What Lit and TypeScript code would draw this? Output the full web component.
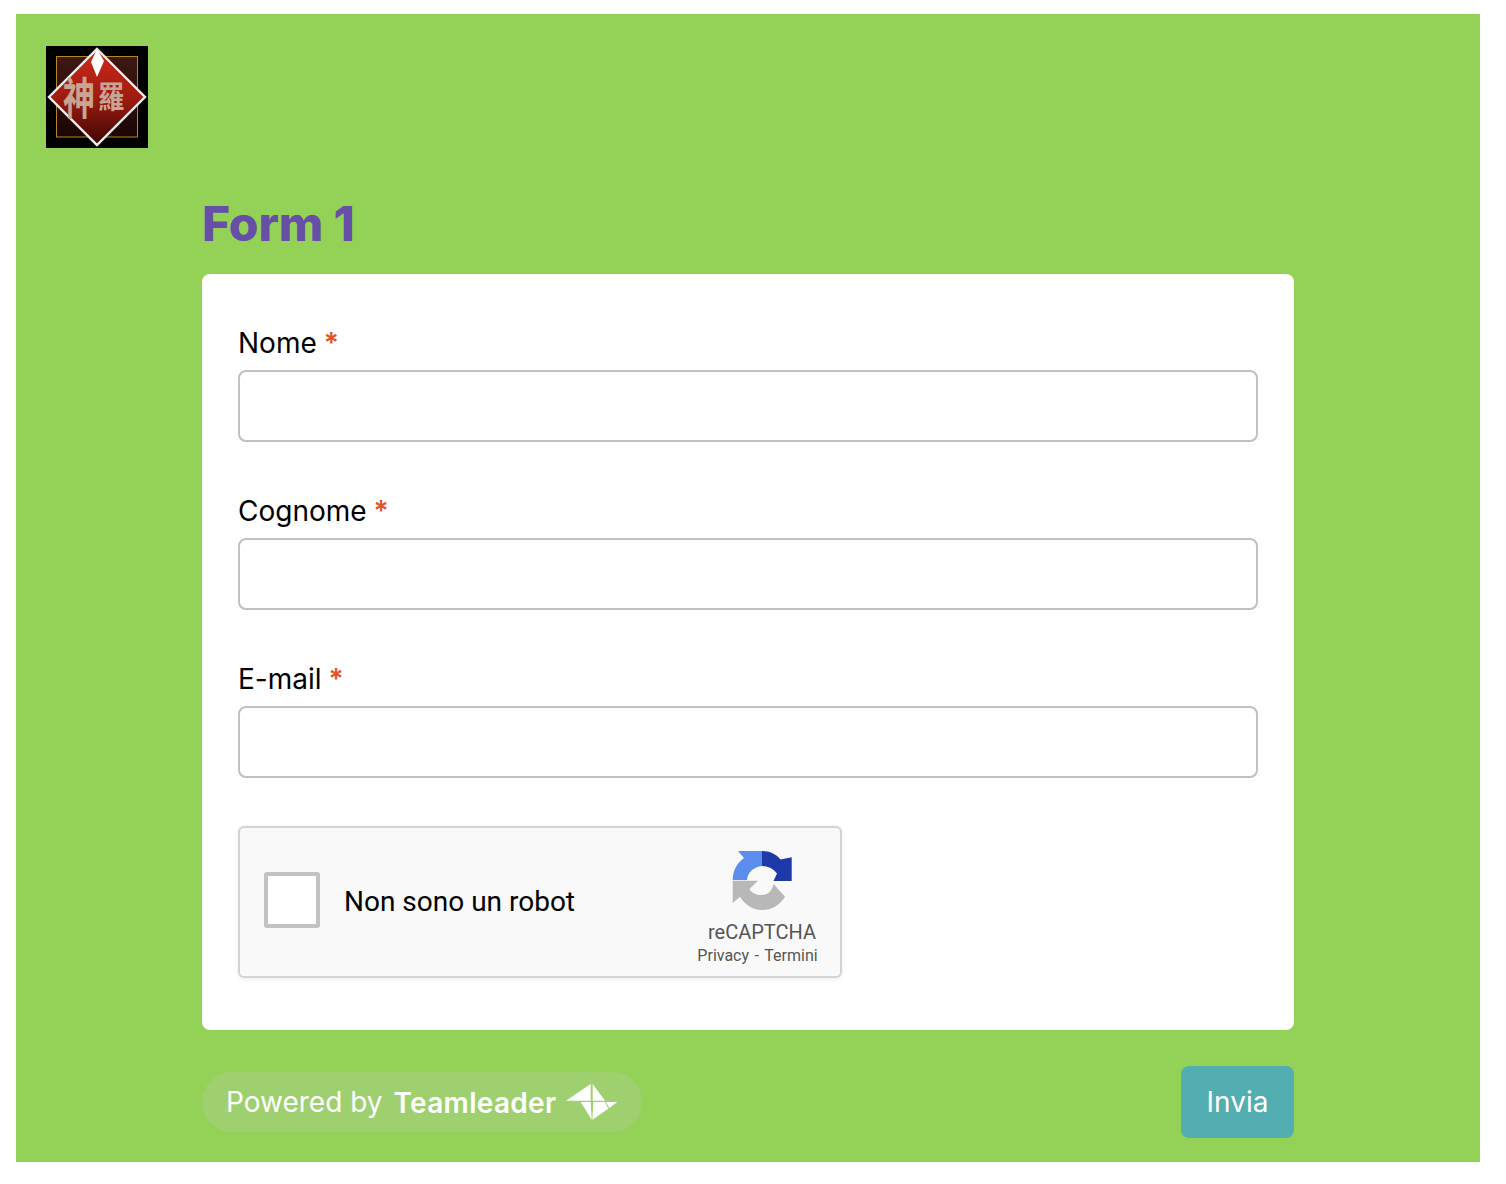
import { LitElement, html, css } from "lit";
import { customElement } from "lit/decorators.js";

const logo = html`<svg class="logo" viewBox="0 0 102 102" width="102" height="102">
  <defs>
    <linearGradient id="sq" x1="0" y1="0" x2="0" y2="1"><stop offset="0" stop-color="#3f1811"/><stop offset="1" stop-color="#1c0504"/></linearGradient>
    <linearGradient id="dm" x1="0" y1="0" x2="0" y2="1"><stop offset="0" stop-color="#cf2a1a"/><stop offset=".5" stop-color="#a01c10"/><stop offset="1" stop-color="#3c0604"/></linearGradient>
  </defs>
  <rect width="102" height="102" fill="#000"/>
  <rect x="10.5" y="10.5" width="81" height="80.5" fill="url(#sq)" stroke="#b8861f" stroke-width="1"/>
  <polygon points="51,3 99,51 51,99 3,51" fill="url(#dm)" stroke="#eee" stroke-width="2.4"/>
  <polygon points="51,3 58,15 51,31 45,16" fill="#fff"/>
  <text class="kanji" transform="translate(17 69) scale(1 1.4)" font-size="32">神</text>
  <text class="kanji" transform="translate(52 62) scale(.98 1.12)" font-size="27">羅</text>
</svg>`;

const recaptcha = html`<svg class="rc" viewBox="0 0 64 64" width="64" height="64">
  <path fill="#1f3aa8" d="M32 3C40 3 46 6 50.5 11.5L61.7 9.3V33H43.5L47 25.5C44 21 38 18 32 18Z"/>
  <path fill="#5b8def" d="M32 3H8L14 10C7 15 3 22 2.7 32H17C17.5 25 23 19 32 18Z"/>
  <path fill="#b8b8b8" d="M2.7 32V55L10 48.7C15 57 23 62 32 62C42 62 50 57 55 48.7L43.5 36C42 43 38 47 32 47C26 47 22 45 19.5 41L28 32.7H2.7Z"/>
</svg>`;

const tlMark = html`<svg class="tl" viewBox="0 0 52 36" width="52" height="36" fill="#fff">
  <polygon points="0,16.7 24.7,0 24.7,16.7"/>
  <polygon points="26.7,0 39,16.7 26.7,16.7"/>
  <polygon points="14.7,18 24.7,18 25.7,35.7"/>
  <polygon points="27.3,18 39,18 42.3,24.7 26.3,35.7"/>
  <polygon points="40,18 51.3,18 43.3,24"/>
</svg>`;

@customElement("app-root")
export class AppRoot extends LitElement {
  static styles = css`
    :host { display: block; padding: 14px 26px 22px 16px; background: #fff; font-family: Inter, "Liberation Sans", sans-serif; }
    .panel { background: #93d157; padding: 32px 186px 24px 30px; height: 1148px; box-sizing: border-box; }
    .logo { display: block; }
    .kanji { font-family: "Noto Sans CJK TC", "Noto Sans CJK SC", serif; font-weight: 700; fill: #c8a592; }
    .form { margin-left: 156px; width: 1092px; }
    h1 { margin: 47px 0 21px; font-size: 48px; line-height: 58px; font-weight: 800; color: #674ea7; letter-spacing: -0.1px; }
    .card { background: #fff; border-radius: 8px; padding: 52px 36px; }
    .field { margin-bottom: 52px; }
    .field.last { margin-bottom: 48px; }
    label { display: block; font-size: 28px; line-height: 34px; color: #000; margin-bottom: 10px; }
    .req { color: #e0552c; margin-left: -1px; font-weight: 600; }
    .input { height: 72px; box-sizing: border-box; border: 2px solid #c0c0c6; border-radius: 8px; background: #fff; }
    .captcha { width: 604px; height: 152px; box-sizing: border-box; border: 2px solid #d3d3d3; border-radius: 6px; background: #f9f9f9; box-shadow: 0 1px 4px rgba(0,0,0,.08); display: flex; align-items: center; padding: 0 0 4px 24px; font-family: Roboto, sans-serif; }
    .box { width: 56px; height: 56px; box-sizing: border-box; border: 4px solid #c1c1c1; border-radius: 3px; background: #fff; flex: none; }
    .robot { margin: 2px 0 0 24px; font-size: 28px; color: #000; flex: 1; }
    .brand { width: 130px; margin: 20px 13px 0 0; align-self: flex-start; display: flex; flex-direction: column; align-items: center; color: #555; }
    .rc { display: block; margin-bottom: 7px; }
    .brand-name { font-size: 20px; line-height: 26px; }
    .brand-links { font-size: 16px; line-height: 20px; white-space: nowrap; margin: 1px 9px 0 0; word-spacing: 1.6px; }
    .footer { margin-top: 36px; display: flex; justify-content: space-between; align-items: center; }
    .pill { width: 440px; height: 60px; box-sizing: border-box; border-radius: 30px; background: #9fd06f; color: #fff; display: flex; align-items: center; padding-left: 24px; font-size: 28px; }
    .tm { font-weight: 600; margin: 2px 10px 0 11px; letter-spacing: 0.3px; }
    .tl { display: block; }
    .btn { width: 113px; height: 72px; border: 0; border-radius: 8px; background: #52aeb0; color: #fff; font: 400 28px Inter, sans-serif; padding: 0; }
  `;

  field(name: string, last = false) {
    return html`<div class="field ${last ? "last" : ""}">
      <label>${name} <span class="req">*</span></label>
      <div class="input"></div>
    </div>`;
  }

  render() {
    return html`<div class="panel">
      ${logo}
      <div class="form">
        <h1>Form 1</h1>
        <div class="card">
          ${this.field("Nome")}
          ${this.field("Cognome")}
          ${this.field("E-mail", true)}
          <div class="captcha">
            <div class="box"></div>
            <div class="robot">Non sono un robot</div>
            <div class="brand">
              ${recaptcha}
              <div class="brand-name">reCAPTCHA</div>
              <div class="brand-links">Privacy - Termini</div>
            </div>
          </div>
        </div>
        <div class="footer">
          <div class="pill"><span>Powered by</span><span class="tm">Teamleader</span>${tlMark}</div>
          <button class="btn">Invia</button>
        </div>
      </div>
    </div>`;
  }
}
